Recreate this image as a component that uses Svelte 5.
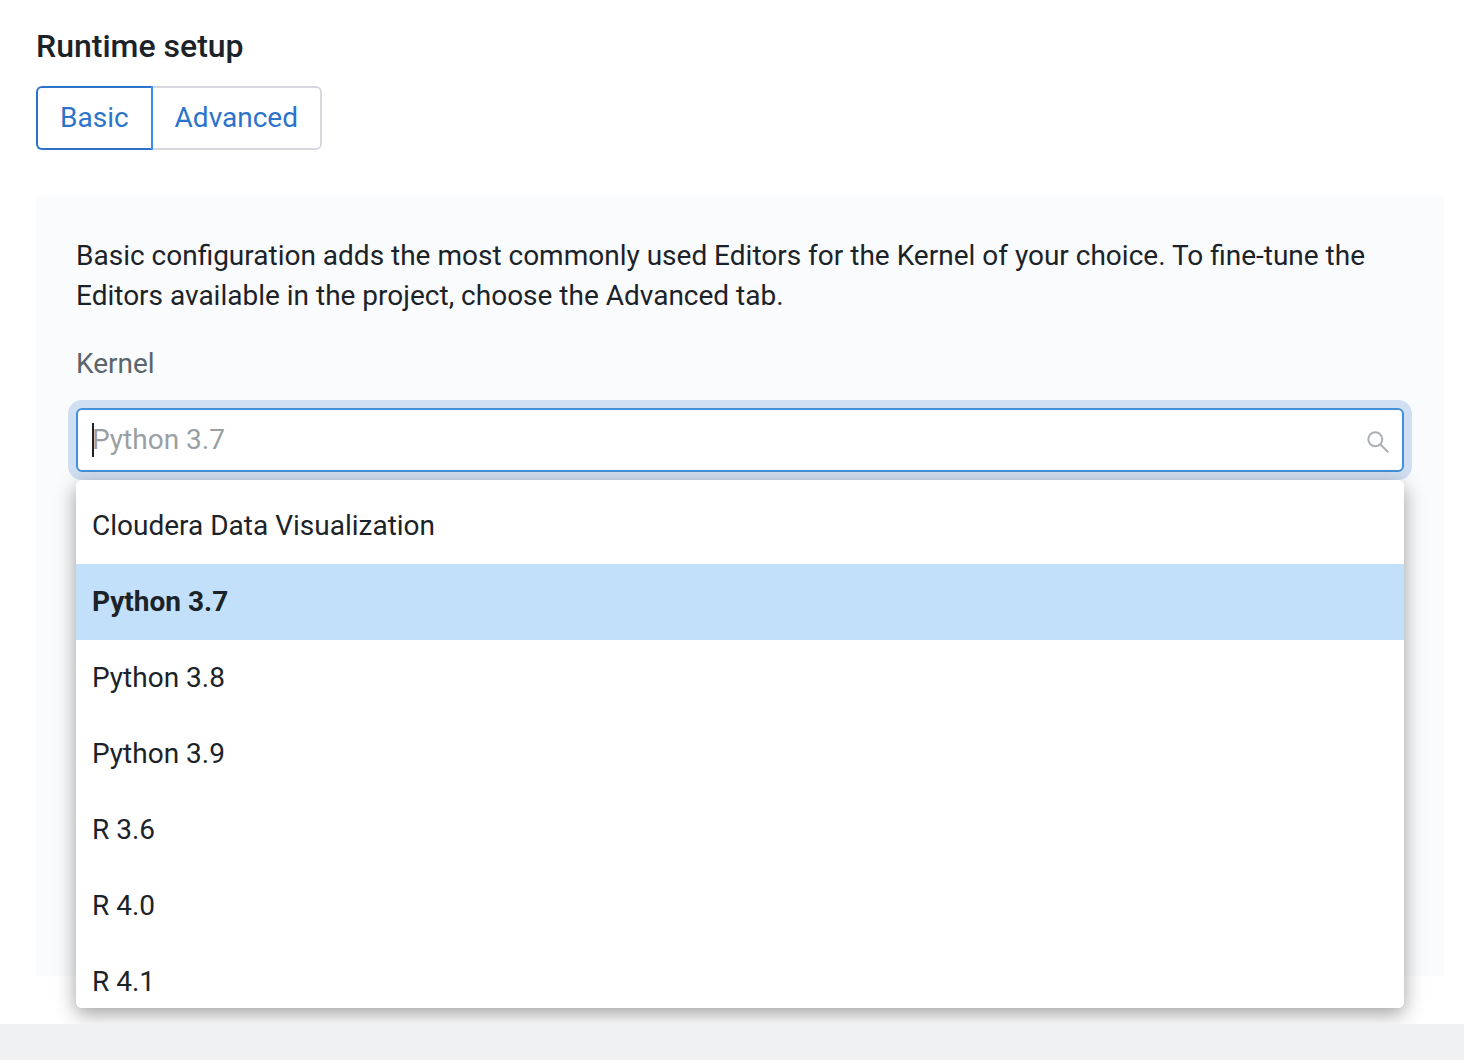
<script>
  const modes = ['Basic', 'Advanced'];
  const kernels = [
    'Cloudera Data Visualization',
    'Python 3.7',
    'Python 3.8',
    'Python 3.9',
    'R 3.6',
    'R 4.0',
    'R 4.1'
  ];
  let mode = $state('Basic');
  let selected = $state('Python 3.7');
  let query = $state('');
</script>

<main class="page">
  <h2 class="title" id="setup-title">Runtime setup</h2>
  <div class="modes" role="group" aria-labelledby="setup-title">
    {#each modes as name}
      <button
        type="button"
        class="mode"
        class:active={mode === name}
        aria-pressed={mode === name}
        onclick={() => (mode = name)}>{name}</button>
    {/each}
  </div>

  <section class="panel">
    <p class="intro">
      Basic configuration adds the most commonly used Editors for the Kernel of your choice. To
      fine-tune the Editors available in the project, choose the Advanced tab.
    </p>
    <label class="label" for="kernel">Kernel</label>
    <div class="field">
      <div class="control">
        <span class="caret" aria-hidden="true"></span>
        <input
          id="kernel"
          class="search"
          type="text"
          role="combobox"
          aria-expanded="true"
          aria-controls="kernel-list"
          autocomplete="off"
          placeholder={selected}
          bind:value={query} />
        <svg class="icon" viewBox="0 0 26 26" aria-hidden="true">
          <circle cx="11.3" cy="12.3" r="7" />
          <path d="M16.2 17.2L24.2 25.2" />
        </svg>
      </div>
      <div class="menu" id="kernel-list" role="listbox" aria-label="Kernel">
        {#each kernels as kernel}
          <button
            type="button"
            class="option"
            class:selected={selected === kernel}
            role="option"
            aria-selected={selected === kernel}
            onclick={() => (selected = kernel)}>{kernel}</button>
        {/each}
      </div>
    </div>
  </section>
</main>

<style>
  :global(body) {
    background: #f0f1f3;
  }
  .page {
    box-sizing: border-box;
    padding: 24px 20px 48px 36px;
    background: #fff;
    color: #1b2329;
    font-family: Roboto, sans-serif;
    font-size: 28px;
    line-height: 40px;
  }
  .title {
    margin: 0 0 18px;
    font-size: 32px;
    line-height: 44px;
    font-weight: 500;
  }
  .modes {
    display: flex;
    margin-bottom: 46px;
  }
  .mode {
    box-sizing: border-box;
    height: 64px;
    margin: 0;
    padding: 0 22px;
    border: 2px solid #d8d9de;
    background: #fff;
    color: #2c73cb;
    font: inherit;
    cursor: pointer;
  }
  .mode:first-child {
    border-radius: 6px 0 0 6px;
  }
  .mode:last-child {
    margin-left: -2px;
    border-radius: 0 6px 6px 0;
  }
  .mode.active {
    position: relative;
    border-color: #2c73cb;
  }
  .mode.active:first-child {
    border-right-color: #3a8cf5;
  }
  .panel {
    box-sizing: border-box;
    min-height: 780px;
    padding: 40px;
    background: #fafbfd;
  }
  .intro {
    margin: 0 0 28px;
  }
  .label {
    display: block;
    margin-bottom: 24px;
    color: #5a656d;
  }
  .field {
    position: relative;
  }
  .control {
    box-sizing: border-box;
    display: flex;
    align-items: center;
    height: 64px;
    padding: 0 12px 0 14px;
    border: 2px solid #4590da;
    border-radius: 6px;
    background: #fff;
    box-shadow: 0 0 0 8px #d1dff2;
  }
  .caret {
    width: 2px;
    height: 34px;
    margin-right: -2px;
    background: #1b2329;
    z-index: 1;
  }
  .search {
    flex: 1;
    min-width: 0;
    height: 40px;
    padding: 0;
    border: 0;
    outline: 0;
    background: transparent;
    color: inherit;
    caret-color: transparent;
    font: inherit;
  }
  .search::placeholder {
    color: #9a9fa3;
    opacity: 1;
  }
  .icon {
    width: 26px;
    height: 26px;
    fill: none;
    stroke: #abb0b4;
    stroke-width: 2;
  }
  .menu {
    position: absolute;
    top: calc(100% + 8px);
    left: 0;
    right: 0;
    box-sizing: border-box;
    max-height: 528px;
    padding: 8px 0;
    overflow-y: auto;
    scrollbar-width: none;
    border-radius: 6px;
    background: #fff;
    box-shadow: 0 6px 20px rgba(0, 0, 0, 0.38);
  }
  .option {
    display: block;
    width: 100%;
    margin: 0;
    padding: 18px 16px;
    border: 0;
    background: transparent;
    color: inherit;
    font: inherit;
    text-align: left;
    cursor: pointer;
  }
  .option.selected {
    background: #c3e0fb;
    font-weight: 700;
  }
</style>
